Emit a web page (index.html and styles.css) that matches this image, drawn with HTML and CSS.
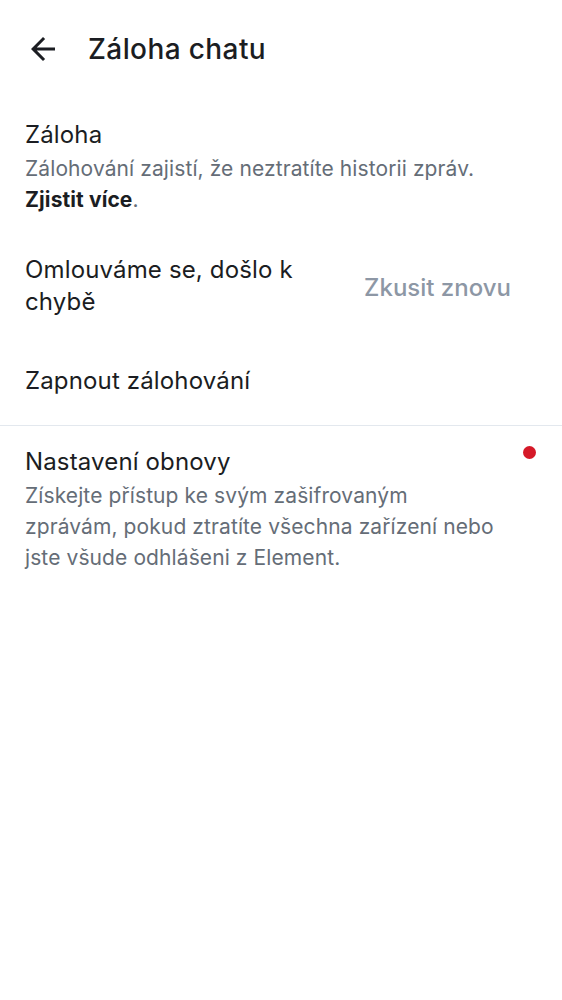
FILE: index.html
```html
<!DOCTYPE html>
<html lang="cs">
<head>
<meta charset="utf-8">
<title>Záloha chatu</title>
<link rel="stylesheet" href="styles.css">
</head>
<body>
<div class="screen">
  <header class="topbar">
    <span class="back">
      <svg viewBox="0 0 24 24" width="36" height="36"><path d="M20 11H7.83l5.59-5.59L12 4l-8 8 8 8 1.41-1.41L7.83 13H20v-2z" fill="#1b1d22"/></svg>
    </span>
    <h1 class="title">Záloha chatu</h1>
  </header>

  <section class="item item-backup">
    <div class="text">
      <div class="label">Záloha</div>
      <div class="desc">Zálohování zajistí, že neztratíte historii zpráv. <b class="link">Zjistit více</b>.</div>
    </div>
  </section>

  <section class="item item-error">
    <div class="text">
      <div class="label label-wide">Omlouváme se, došlo k chybě</div>
    </div>
    <button class="retry">Zkusit znovu</button>
  </section>

  <section class="item item-enable">
    <div class="label label-wide">Zapnout zálohování</div>
  </section>

  <div class="divider"></div>

  <section class="item item-recovery">
    <div class="text">
      <div class="label">Nastavení obnovy</div>
      <div class="desc">Získejte přístup ke svým zašifrovaným<br>zprávám, pokud ztratíte všechna zařízení nebo<br>jste všude odhlášeni z Element.</div>
    </div>
    <span class="dot"></span>
  </section>
</div>
</body>
</html>
```

FILE: styles.css
```css
* { box-sizing: border-box; }
html, body { margin: 0; padding: 0; background: #ffffff; }
body {
  font-family: Inter, Roboto, "Noto Sans", sans-serif;
  color: #1b1d22;
  width: 562px;
  height: 1000px;
}
.screen { display: flex; flex-direction: column; }

.topbar {
  height: 98px;
  display: flex;
  align-items: center;
  padding-left: 25px;
}
.back { width: 36px; height: 36px; display: flex; }
.back svg { display: block; }
.title {
  margin: 0 0 0 27px;
  font-size: 28px;
  font-weight: 500;
  line-height: 34px;
  letter-spacing: 0.4px;
}

.item {
  display: flex;
  align-items: flex-start;
  padding: 0 27px 0 25px;
}
.text { flex: 1; min-width: 0; }
.label {
  font-size: 24px;
  line-height: 30px;
  font-weight: 400;
  letter-spacing: 0.15px;
  color: #1b1d22;
}
.label-wide { line-height: 32px; }
.desc {
  font-size: 21px;
  line-height: 31px;
  letter-spacing: 0.1px;
  color: #656d77;
  margin-top: 3px;
}
.link { font-weight: 700; color: #1b1d22; }

.item-backup { padding-top: 22px; padding-bottom: 20px; }
.item-error { padding-top: 19px; padding-bottom: 20px; align-items: center; }
.retry {
  border: 0;
  background: none;
  font-family: inherit;
  font-size: 24px;
  font-weight: 500;
  color: #8d97a5;
  padding: 0 24px;
  margin-top: 4px;
  line-height: 32px;
}
.item-enable { padding-top: 27px; padding-bottom: 28px; }

.divider { height: 1px; background: #e3e8ee; }

.item-recovery { padding-top: 21px; }
.dot {
  width: 13px;
  height: 13px;
  border-radius: 50%;
  background: #d51928;
  margin-top: -1px;
  margin-right: -1px;
  flex: none;
}
```
